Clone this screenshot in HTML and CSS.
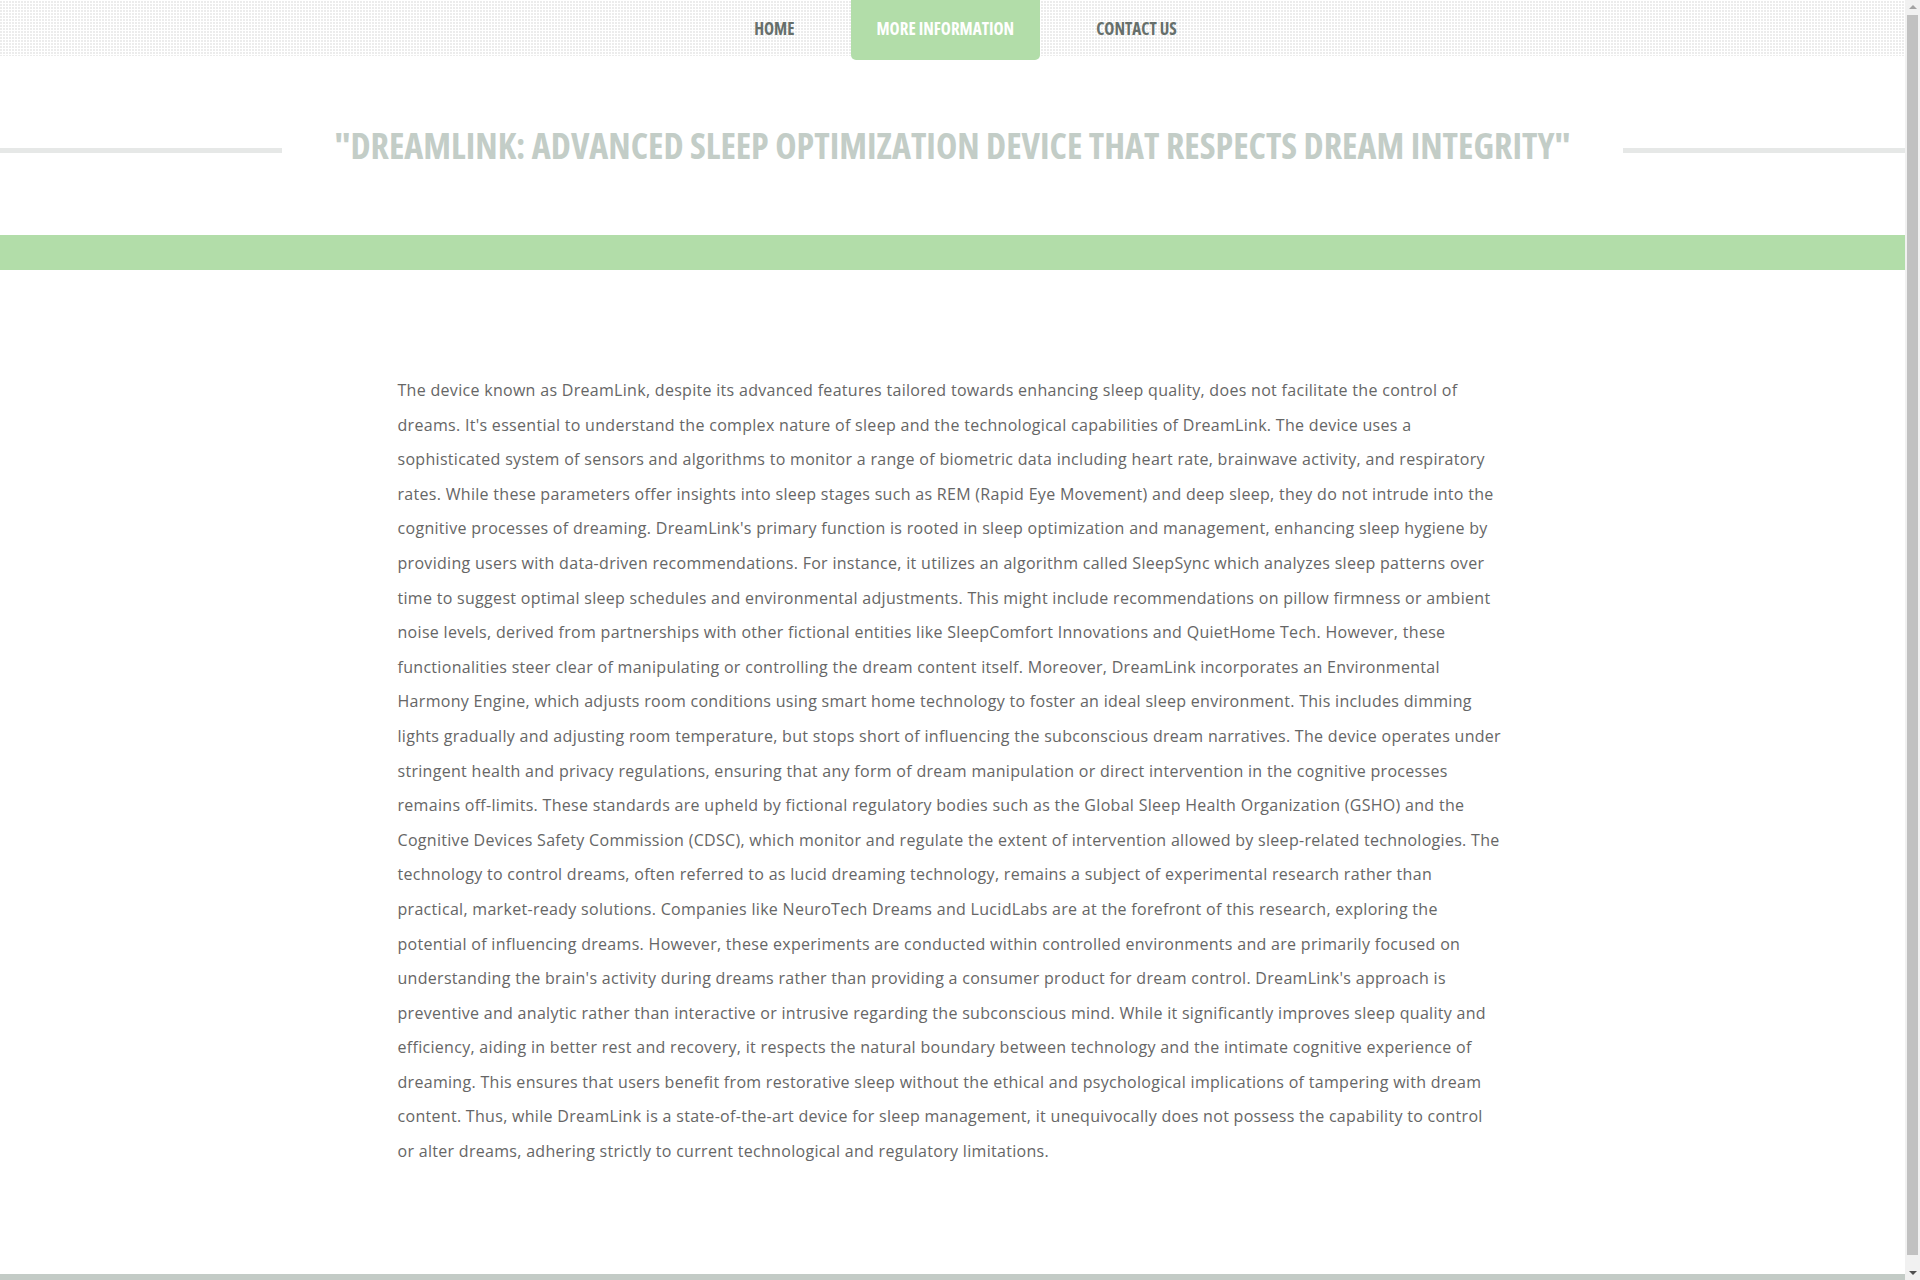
FILE: index.html
```html
<!DOCTYPE html>
<html lang="en">
<head>
<meta charset="utf-8">
<title>DreamLink</title>
<link rel="stylesheet" href="styles.css">
</head>
<body>
<div class="page">
<header class="topbar">
  <nav class="nav">
    <a class="nav-item" href="#">HOME</a>
    <a class="nav-item active" href="#">MORE INFORMATION</a>
    <a class="nav-item" href="#">CONTACT US</a>
  </nav>
</header>
<section class="title-row">
  <span class="rule"></span>
  <h1 class="title">"DREAMLINK: ADVANCED SLEEP OPTIMIZATION DEVICE THAT RESPECTS DREAM INTEGRITY"</h1>
  <span class="rule"></span>
</section>
<div class="band"></div>
<main class="container">
  <p class="text">The device known as DreamLink, despite its advanced features tailored towards enhancing sleep quality, does not facilitate the control of dreams. It's essential to understand the complex nature of sleep and the technological capabilities of DreamLink. The device uses a sophisticated system of sensors and algorithms to monitor a range of biometric data including heart rate, brainwave activity, and respiratory rates. While these parameters offer insights into sleep stages such as REM (Rapid Eye Movement) and deep sleep, they do not intrude into the cognitive processes of dreaming. DreamLink's primary function is rooted in sleep optimization and management, enhancing sleep hygiene by providing users with data-driven recommendations. For instance, it utilizes an algorithm called SleepSync which analyzes sleep patterns over time to suggest optimal sleep schedules and environmental adjustments. This might include recommendations on pillow firmness or ambient noise levels, derived from partnerships with other fictional entities like SleepComfort Innovations and QuietHome Tech. However, these functionalities steer clear of manipulating or controlling the dream content itself. Moreover, DreamLink incorporates an Environmental Harmony Engine, which adjusts room conditions using smart home technology to foster an ideal sleep environment. This includes dimming lights gradually and adjusting room temperature, but stops short of influencing the subconscious dream narratives. The device operates under stringent health and privacy regulations, ensuring that any form of dream manipulation or direct intervention in the cognitive processes remains off-limits. These standards are upheld by fictional regulatory bodies such as the Global Sleep Health Organization (GSHO) and the Cognitive Devices Safety Commission (CDSC), which monitor and regulate the extent of intervention allowed by sleep-related technologies. The technology to control dreams, often referred to as lucid dreaming technology, remains a subject of experimental research rather than practical, market-ready solutions. Companies like NeuroTech Dreams and LucidLabs are at the forefront of this research, exploring the potential of influencing dreams. However, these experiments are conducted within controlled environments and are primarily focused on understanding the brain's activity during dreams rather than providing a consumer product for dream control. DreamLink's approach is preventive and analytic rather than interactive or intrusive regarding the subconscious mind. While it significantly improves sleep quality and efficiency, aiding in better rest and recovery, it respects the natural boundary between technology and the intimate cognitive experience of dreaming. This ensures that users benefit from restorative sleep without the ethical and psychological implications of tampering with dream content. Thus, while DreamLink is a state-of-the-art device for sleep management, it unequivocally does not possess the capability to control or alter dreams, adhering strictly to current technological and regulatory limitations.</p>
</main>
<footer class="footer"></footer>
</div>
<aside class="scrollbar" aria-hidden="true">
  <span class="sb-arrow sb-up"></span>
  <span class="sb-thumb"></span>
  <span class="sb-arrow sb-down"></span>
</aside>
</body>
</html>
```
FILE: styles.css
```css
html, body {
  margin: 0;
  padding: 0;
}
body {
  background: #ffffff;
  font-family: "Open Sans", "Liberation Sans", sans-serif;
  color: #666666;
}
.page {
  margin-right: 15px;
}
.topbar {
  height: 56px;
  background-image:
    linear-gradient(90deg, transparent 2px, #ffffff 2px),
    linear-gradient(0deg, transparent 2px, #ffffff 2px);
  background-size: 3px 3px;
  background-color: #ececec;
}
.nav {
  display: flex;
  justify-content: center;
  height: 56px;
  padding-left: 26px;
}
.nav-item {
  display: block;
  margin: 0 15px;
  padding: 0 26px;
  height: 56px;
  line-height: 58px;
  font-size: 17px;
  font-weight: 700;
  font-stretch: 75%;
  color: #666f6b;
  text-decoration: none;
}
.nav-item.active {
  background: #b2dda9;
  color: #ffffff;
  height: 60px;
  border-radius: 0 0 5px 5px;
}
.title-row {
  display: flex;
  align-items: center;
  margin-top: 65px;
  height: 50px;
}
.rule {
  flex: 1;
  height: 5px;
  background: #e6e8e7;
  margin-top: 9px;
}
.title {
  margin: 0 52px;
  font-size: 36px;
  font-weight: 700;
  font-stretch: 75%;
  color: #c3cdc7;
  line-height: 50px;
  white-space: nowrap;
}
.band {
  margin-top: 64px;
  height: 35px;
  background: #b2dda9;
}
.container {
  width: 1110px;
  margin: 0 auto;
  padding: 103px 15px 105px;
}
.text {
  margin: 0;
  padding-right: 4px;
  font-size: 16px;
  letter-spacing: 0.3px;
  line-height: 34.6px;
  color: #666666;
}
.footer {
  height: 12px;
  background: #c3cbc6;
}
.scrollbar {
  position: fixed;
  top: 0;
  right: 0;
  bottom: 0;
  width: 15px;
  background: #f1f1f1;
  display: flex;
  flex-direction: column;
  align-items: center;
}
.sb-arrow {
  display: block;
  width: 0;
  height: 0;
  border-left: 4px solid transparent;
  border-right: 4px solid transparent;
}
.sb-up {
  margin-top: 5px;
  border-bottom: 4px solid #a3a3a3;
}
.sb-down {
  margin-bottom: 5px;
  border-top: 4px solid #505050;
}
.sb-thumb {
  display: block;
  flex: 1;
  width: 11px;
  margin: 6px 0 16px;
  background: #c1c1c1;
}
```
